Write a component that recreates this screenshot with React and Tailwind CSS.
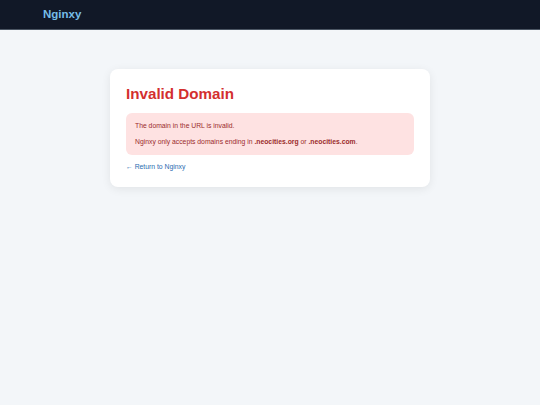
export default function App() {
  return (
    <div className="min-h-[405px] bg-[#f3f6f9] font-['Liberation_Sans',Arial,sans-serif]">
      <header className="h-[30px] bg-[#111827] border-b border-[#4b5563] flex items-center px-[43px]">
        <span className="text-[11.5px] font-bold text-[#76bde8]">Nginxy</span>
      </header>

      <main className="flex justify-center pt-[39px]">
        <div className="w-[320px] bg-white rounded-[8px] shadow-[0_2px_10px_rgba(0,0,0,0.08)] px-4 pt-[15px] pb-[14px]">
          <h1 className="text-[15.2px] font-bold text-[#d32f2f] leading-[20px]">Invalid Domain</h1>

          <div className="mt-[9px] bg-[#fee2e2] rounded-[6px] px-[9px] py-[8px] text-[6.8px] text-[#9b2c2c] space-y-[6px]">
            <p>The domain in the URL is invalid.</p>
            <p>
              Nginxy only accepts domains ending in <strong>.neocities.org</strong> or{' '}
              <strong>.neocities.com</strong>.
            </p>
          </div>

          <a href="#" className="block mt-[7px] text-[6.8px] text-[#2b6cb0]">
            ← Return to Nginxy
          </a>
        </div>
      </main>
    </div>
  );
}
